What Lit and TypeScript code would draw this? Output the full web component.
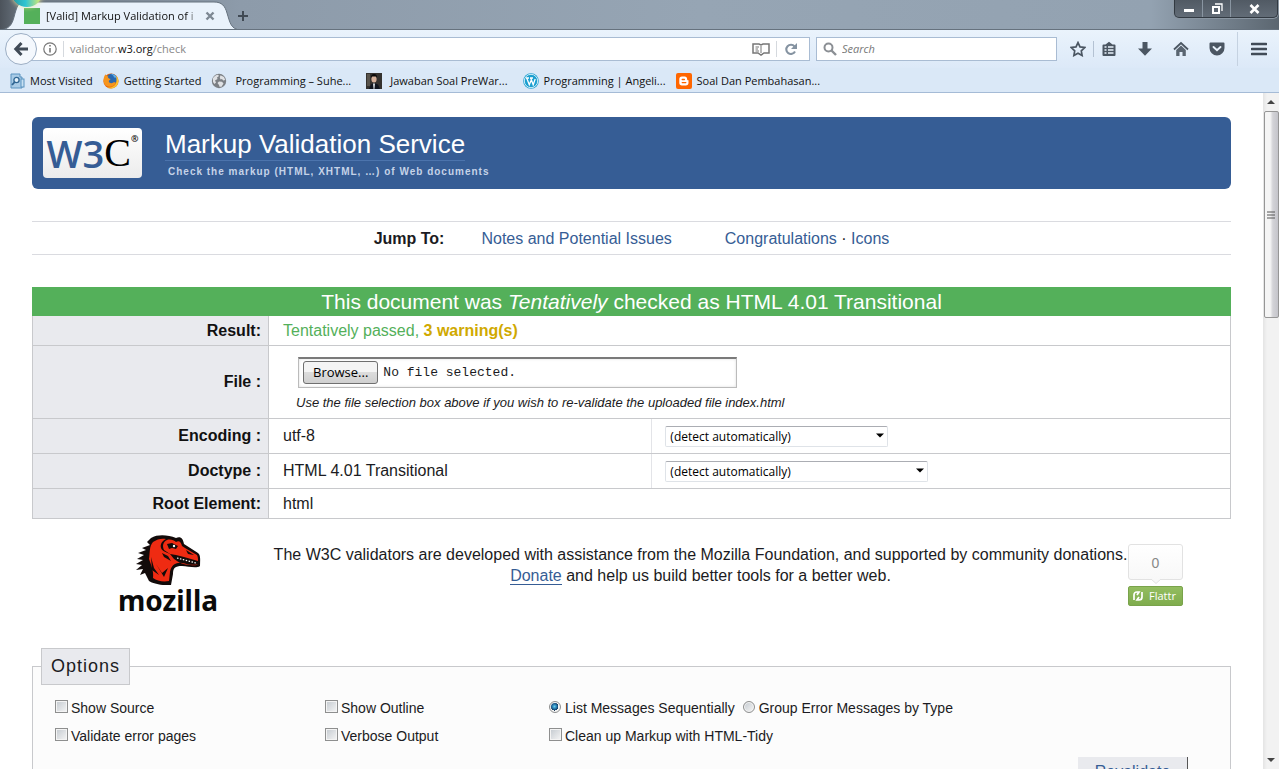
import { LitElement, html, css, svg } from "lit";
import { customElement, state } from "lit/decorators.js";

const bookmarkIcons: Record<string, unknown> = {
  visited: svg`<path d="M2 1h9v3h2v11H2z" fill="#a9cbe6" stroke="#5b93bf"/><rect x="12" y="6" width="3" height="8" fill="#c7e0f2" stroke="#5b93bf"/><circle cx="7.5" cy="7" r="2.6" fill="#e4f1fb" stroke="#2f6592" stroke-width="1.3"/><path d="M5.6 9.2 3 12" stroke="#2f6592" stroke-width="1.8"/>`,
  firefox: svg`<circle cx="8" cy="8" r="7.6" fill="#e8650d"/><circle cx="8.6" cy="6.2" r="5.4" fill="#2a68b0"/><path d="M8 1c4 0 6 2.600 6 5-1-1.500-2-1.700-3-1.500C11 3 9.500 2 8 1z" fill="#5fb0e8"/><path d="M.6 6C1 3 2 2 2.600 1.200 3 2.500 4 3.200 5.400 3.600 4.800 4.500 5 5.200 6 5.500L7.600 6C7 7.200 5.600 7.300 5.800 8.600c.5 1.800 3 2 4.400 1 1.500-.9 2.800.1 2.400.7C11 14.500 4 15 1.500 11 .6 9.500.4 7.500.6 6z" fill="#f6951d"/><path d="M13.500 3c2 2.500 2.500 6 .8 8.800C12 15.600 7 16.500 4 14.500c5 .7 9-2 9.500-6z" fill="#fbc42d"/>`,
  globe: svg`<circle cx="8" cy="8" r="7.200" fill="#7b7f84"/><path d="M2 5c1.500-2 3-3 5-3.200L8 3 6 4.500 6.500 6 4 7.500 5 9.500 3.500 11 2 9z" fill="#dfe1e4"/><path d="M9.500 2.200 13 4l1.200 3-2 .5L11 6 9.500 6.500 8.800 4.500zM8 8.500l3 .3 1.500 1.700-2 3.300H8.500L8 12 6.500 10z" fill="#dfe1e4"/>`,
  portrait: svg`<rect width="16" height="16" fill="#35322f"/><rect x="1" y="1" width="3" height="12" fill="#59544c"/><path d="M3 16 5 11.500 8 10l4 1.500 2 4.500z" fill="#10151f"/><ellipse cx="8" cy="6" rx="2.600" ry="3.600" fill="#d5b09a"/><path d="M5 5C5 2 6 1 8 1s3.200 1 3 4l-1-1.500H6z" fill="#0b0a0a"/><path d="M7 10.500h2L8.400 16h-.8z" fill="#e3e8ed"/>`,
  wordpress: svg`<circle cx="8" cy="8" r="7.800" fill="#1b9fd0"/><circle cx="8" cy="8" r="6.700" fill="none" stroke="#fff" stroke-width=".8"/><path d="M3 5h3M7 5h3M3.800 5.200 6.300 11.800 8 7.500M7.800 5.200l2.400 6.600 2-5.800" fill="none" stroke="#fff" stroke-width="1.300"/>`,
  blogger: svg`<rect width="16" height="16" rx="2" fill="#f60"/><path d="M6 3.500h2.600a2.500 2.500 0 0 1 2.500 2.500c0 1 .3 1.200 1.400 1.300v2.500a2.700 2.700 0 0 1-2.700 2.700H6a2.700 2.700 0 0 1-2.700-2.700V6.200A2.700 2.700 0 0 1 6 3.500z" fill="#fff"/><path d="M6.200 6.500h2.200M6.200 9.600h3.600" stroke="#f60" stroke-width="1.300" stroke-linecap="round"/>`,
};

const toolIcons = [
  { name: "Bookmark this page", art: svg`<path d="m8 1.600 2 4.300 4.700.6-3.400 3.300.8 4.700L8 12.200l-4.100 2.300.8-4.700L1.300 6.500 6 5.900z" fill="none" stroke="#4b5662" stroke-width="1.700"/>` },
  { name: "Library", art: svg`<path d="M1.500 4.500a1 1 0 0 1 1-1h2L8 .8l3.500 2.700h2a1 1 0 0 1 1 1V14a1 1 0 0 1-1 1h-11a1 1 0 0 1-1-1z" fill="#4b5662"/><path d="M3.500 6h2M7 6h5.500M3.500 9h2M7 9h5.500M3.500 12h2M7 12h5.500" stroke="#e9f2fb" stroke-width="1.500"/>` },
  { name: "Downloads", art: svg`<path d="M5.500 1h5v6.500H15L8 14.800 1 7.500h4.500z" fill="#4b5662"/>` },
  { name: "Home", art: svg`<path d="M1 8.500 8 2l7 6.500" fill="none" stroke="#4b5662" stroke-width="1.800"/><path d="M3.200 9 8 4.600 12.800 9v6H9.500v-4h-3v4H3.200z" fill="#5a6571"/>` },
  { name: "Pocket", art: svg`<path d="M1.500 1.500h13a1 1 0 0 1 1 1V7a7.500 7.500 0 0 1-15 0V2.500a1 1 0 0 1 1-1z" fill="#4b5662"/><path d="m4.500 6 3.500 3.300L11.500 6" fill="none" stroke="#e9f2fb" stroke-width="1.900" stroke-linecap="round"/>` },
];

@customElement("browser-chrome")
export class BrowserChrome extends LitElement {
  static styles = css`
    :host { display: block; font: 11px/16px "Open Sans", "Noto Sans", sans-serif; color: #111; }
    * { box-sizing: border-box; }
    svg { display: block; flex: none; }
    button { border: 0; padding: 0; background: none; font: inherit; color: inherit; }
    .strip { display: flex; align-items: flex-start; height: 30px; overflow: hidden; position: relative;
      border-bottom: 1px solid #66727e;
      background: linear-gradient(90deg, #4c535b 0, #6c7782 22px, #8d9baa 240px, #96a5b4 700px, #93a2b1 90%, #5b6670 100%); }
    .orb { position: absolute; left: 12px; top: -20px; width: 30px; height: 27px; border-radius: 50%;
      background: linear-gradient(90deg, #2799a0, #2fc4d2 45%, #e6ee66); box-shadow: 0 0 5px #f1f0a0; }
    .tab { position: relative; width: 237px; height: 30px; display: flex; align-items: center; gap: 6px; padding: 2px 22px 0 24px; }
    .shape { position: absolute; left: 0; top: 0; }
    .fav { position: relative; width: 16px; height: 16px; flex: none; background: #54b05a; }
    .title { position: relative; flex: 1; min-width: 0; overflow: hidden; white-space: nowrap;
      mask-image: linear-gradient(90deg, #000 92%, transparent); }
    .close { position: relative; }
    .add { padding: 10px 0 0 0; }
    .wins { margin-left: auto; margin-right: 1px; display: flex; height: 18px; border: 1px solid #323a42; border-top: 0;
      border-radius: 0 0 5px 5px; background: linear-gradient(#515a64, #626c77); box-shadow: 0 0 0 1px #8995a1; overflow: hidden; }
    .win { width: 28px; display: grid; place-items: center; border-right: 1px solid #8995a1; }
    .win:last-child { width: 46px; border: 0; }
    .nav { display: flex; align-items: center; height: 38px; padding: 0 12px 0 5px; background: linear-gradient(#eaf3fc, #dce9f8); }
    .back { width: 32px; height: 32px; flex: none; border: 1px solid #9caec4; border-radius: 50%; background: #f4f8fd;
      display: grid; place-items: center; z-index: 1; margin-right: -7px; }
    .box { height: 24px; border: 1px solid #a9bcd3; background: #fff; display: flex; align-items: center; }
    .url { flex: 3.330; padding: 0 10px 0 12px; gap: 6px; }
    .sep { width: 1px; height: 16px; background: #d5d9de; }
    .address { flex: 1; color: #888; }
    .address b { font-weight: 400; color: #111; }
    .find { flex: 1; margin-left: 6px; padding: 0 6px; gap: 5px; }
    .find input { flex: 1; min-width: 0; border: 0; padding: 0; outline: 0; background: none; font: inherit; }
    .find input::placeholder { font-style: italic; color: #777; }
    .tools { display: flex; align-items: center; gap: 20px; padding-left: 13px; }
    .tools .star { margin-right: -13px; padding-right: 7px; border-right: 1px solid #b4c2d3; }
    .menu { height: 34px; display: grid; place-items: center; margin-left: 12px; padding-left: 13px; border-left: 1px solid #c5d2e1; }
    .marks { display: flex; align-items: center; height: 25px; padding: 1px 9px 0; border-bottom: 1px solid #a5bbd6; background: #dae8f7; }
    .mark { display: flex; align-items: center; gap: 5px; margin-right: 10px; color: #111; text-decoration: none; white-space: nowrap; }
    .mark.wide { gap: 8px; margin-right: 15px; }
  `;

  render() {
    const marks = [
      ["visited", "Most Visited", ""],
      ["firefox", "Getting Started", ""],
      ["globe", "Programming – Suhe...", "wide"],
      ["portrait", "Jawaban Soal PreWar...", "wide"],
      ["wordpress", "Programming | Angeli...", ""],
      ["blogger", "Soal Dan Pembahasan...", ""],
    ];
    return html`
      <div class="strip">
        <div class="tab">
          <svg class="shape" width="240" height="30" viewBox="0 0 240 30"><path d="M0 30C9 29 12 25 14 17 17 6 18 2 26 2H214c8 0 11 4 13 11 3 10 4 16 13 17z" fill="#e9f2fb" stroke="#66727e" stroke-width="1"/></svg>
          <span class="fav"></span>
          <span class="title">[Valid] Markup Validation of i</span>
          <button class="close" aria-label="Close tab"><svg width="10" height="10" viewBox="0 0 10 10"><path d="m1.500 1.500 7 7m0-7-7 7" stroke="#7d8893" stroke-width="2.400"/></svg></button>
        </div>
        <button class="add" aria-label="New tab"><svg width="12" height="12" viewBox="0 0 12 12"><path d="M6 1v10M1 6h10" stroke="#414a54" stroke-width="2"/></svg></button>
        <span class="orb"></span>
        <div class="wins">
          <button class="win" aria-label="Minimise"><svg width="12" height="10" viewBox="0 0 12 10"><path d="M1 5h10v3H1z" fill="#fff"/></svg></button>
          <button class="win" aria-label="Restore"><svg width="12" height="12" viewBox="0 0 12 12"><path d="M4 1h7v7" fill="none" stroke="#fff" stroke-width="1.300"/><path d="M2 4h6v6H2z" fill="none" stroke="#fff" stroke-width="2"/></svg></button>
          <button class="win" aria-label="Close window"><svg width="11" height="10" viewBox="0 0 11 10"><path d="m1.500 1 8 8m0-8-8 8" stroke="#fff" stroke-width="2.600"/></svg></button>
        </div>
      </div>
      <div class="nav">
        <button class="back" aria-label="Back"><svg width="16" height="16" viewBox="0 0 16 16"><path d="M8.500 2 2.800 8l5.700 6M3 8h12" fill="none" stroke="#414b57" stroke-width="3"/></svg></button>
        <div class="box url">
          <svg width="14" height="14" viewBox="0 0 14 14"><circle cx="7" cy="7" r="6.200" fill="none" stroke="#777" stroke-width="1.200"/><path d="M7 6v4.500M7 3v1.600" stroke="#777" stroke-width="1.600"/></svg>
          <span class="sep"></span>
          <span class="address">validator.<b>w3.org</b>/check</span>
          <svg width="18" height="14" viewBox="0 0 18 14"><path d="M1 2h6l2 1 2-1h6v9h-5l-3 2-3-2H1z" fill="none" stroke="#777" stroke-width="1.500"/><path d="M9 4v7M3.500 5H7M3.500 7H6M3.500 9H7" stroke="#777"/></svg>
          <span class="sep"></span>
          <svg width="16" height="14" viewBox="0 0 16 14"><path d="M11.500 4.500A4.600 4.600 0 1 0 12 9.500" fill="none" stroke="#8593a1" stroke-width="2.100"/><path d="M14 1v6H8z" fill="#8593a1"/></svg>
        </div>
        <div class="box find">
          <svg width="14" height="14" viewBox="0 0 14 14"><circle cx="5.500" cy="5.500" r="4" fill="none" stroke="#8b8f94" stroke-width="2"/><path d="m8.500 8.500 4.500 4.500" stroke="#8b8f94" stroke-width="2.400"/></svg>
          <input aria-label="Search" placeholder="Search" />
        </div>
        <div class="tools">
          ${toolIcons.map((t, i) => html`<button class=${i ? "" : "star"} aria-label=${t.name}><svg width="16" height="16" viewBox="0 0 16 16">${t.art}</svg></button>`)}
        </div>
        <button class="menu" aria-label="Menu"><svg width="16" height="16" viewBox="0 0 16 16"><path d="M1 3h14M1 8h14M1 13h14" stroke="#414b57" stroke-width="2.600" stroke-linecap="round"/></svg></button>
      </div>
      <nav class="marks">
        ${marks.map(([icon, text, cls]) => html`<a class="mark ${cls}" href="#"><svg width="16" height="16" viewBox="0 0 16 16">${bookmarkIcons[icon]}</svg>${text}</a>`)}
      </nav>
    `;
  }
}

@customElement("app-root")
export class AppRoot extends LitElement {
  @state() private fileName = "No file selected.";

  static styles = css`
    :host { display: flex; flex-direction: column; height: 100vh; overflow: hidden; background: #fff; color: #1b1b22;
      font: 16px/21px "Liberation Sans", Arial, sans-serif; }
    * { box-sizing: border-box; }
    svg { display: block; }
    a { color: #365d95; text-decoration: none; }
    h1, h2, p { margin: 0; font-weight: 400; }
    .view { flex: 1; min-height: 0; display: flex; }
    .page { flex: 1; min-width: 0; overflow: hidden; padding: 24px 32px 0; }
    .banner { display: flex; align-items: center; gap: 23px; height: 72px; padding: 0 11px; border-radius: 6px; background: #365d95; }
    .w3c { display: flex; justify-content: center; width: 99px; height: 50px; border-radius: 4px; background: linear-gradient(#fff, #ececec);
      font: 600 38px/50px "Open Sans", sans-serif; color: #365d95; }
    .w3c .c { font: 400 40px/50px "Liberation Serif", serif; color: #000; }
    .w3c .r { font-size: 9px; line-height: 22px; color: #000; }
    .name { font-size: 26px; line-height: 32px; }
    .name a { display: inline-block; color: #fff; border-bottom: 1px solid #4c74ad; }
    .tagline { padding: 4px 0 0 3px; font-size: 10px; line-height: 14px; font-weight: 700; letter-spacing: 1px; color: #c5d3e8; }
    .jump { display: flex; justify-content: center; margin-top: 32px; padding: 6px 0 5px; border: solid #dadbe0; border-width: 1px 0; }
    .jump strong { margin-right: 37px; }
    .jump .notes { margin-right: 53px; }
    .status { margin-top: 32px; height: 29px; background: #54b05a; color: #fff; text-align: center; font-size: 21px; line-height: 29px; }
    table { width: 100%; table-layout: fixed; border-collapse: collapse; border: 1px solid #c8c9cc; border-top: 0; }
    .c1 { width: 236px; }
    .c2 { width: 32%; }
    th, td { height: 30px; padding: 0 14px; border-bottom: 1px solid #c8c9cc; text-align: left; }
    .result th, .result td { height: 29px; }
    th { padding: 0 7px; border-right: 1px solid #c8c9cc; background: #e9eaee; color: #111; text-align: right; }
    .tall th, .tall td { height: 35px; }
    .tall td + td { padding-left: 13px; border-left: 1px solid #e3e4e8; }
    .ok { color: #54b05a; }
    .ok strong { color: #d0a900; }
    .upload { padding: 11px 27px 0; }
    .picker { display: flex; align-items: center; gap: 5px; width: 439px; max-width: 100%; height: 31px; margin-left: 2px; padding: 0 4px;
      border: 1px solid #bbb; border-top: 2px solid #7a7a7a; box-shadow: inset 0 0 3px #ddd; font: 13px/20px "Liberation Mono", monospace; }
    .picker button { height: 23px; padding: 0 9px; border: 1px solid #6f6f6f; border-radius: 3px; color: #000;
      background: linear-gradient(#f4f4f4 50%, #dcdcdc 50%, #cfcfcf); font: 13px/19px "Open Sans", sans-serif; }
    .hint { font-size: 13px; line-height: 30px; font-style: italic; }
    .pick { position: relative; display: inline-block; vertical-align: middle; }
    .pick select { appearance: none; width: 223px; height: 21px; padding: 0 4px; border: 1px solid #dfe3e8; border-top-color: #abadb3;
      border-radius: 2px; background: #fff; color: #000; font: 12px/18px "Open Sans", sans-serif; }
    .pick.wide select { width: 263px; }
    .pick svg { position: absolute; right: 4px; top: 8px; pointer-events: none; }
    .sponsor { display: grid; grid-template-columns: 241px 1fr 103px; margin-top: 16px; height: 80px; }
    .moz { display: flex; flex-direction: column; align-items: center; padding-left: 31px; font: 700 28px/30px "Noto Sans", sans-serif; color: #0b0b0b; }
    .pitch { padding-top: 9px; text-align: center; }
    .pitch a { border-bottom: 1px solid #365d95; }
    .flattr { width: 55px; padding-top: 9px; }
    .count { height: 36px; border: 1px solid #e2e2e2; border-radius: 3px; background: linear-gradient(#fff, #f8f8f8); color: #888;
      font-size: 14px; line-height: 36px; text-align: center; }
    .tip { margin: -1px auto 0; }
    .give { display: flex; align-items: center; gap: 6px; width: 55px; height: 20px; margin-top: 2px; padding: 0 4px; border: 1px solid #79a34b; border-radius: 2px;
      background: linear-gradient(#93bd60, #7fac4d); color: #fff; font: 11px/16px "Open Sans", sans-serif; }
    fieldset { margin: 33px 0 0; padding: 9px 42px 20px 22px; border: 1px solid #c8c9cc; background: #fcfcfc; font-size: 14px; line-height: 28px; min-width: 0; }
    legend { margin-left: -14px; padding: 0 9px; height: 37px; border: 1px solid #c8c9cc; background: #e9eaee; font-size: 18px; line-height: 34px; letter-spacing: 1px; }
    .opts { display: grid; grid-template-columns: 270px 224px 1fr; }
    .opts label { display: inline-flex; align-items: center; gap: 3px; margin-right: 8px; }
    input[type="checkbox"], input[type="radio"] { appearance: none; width: 13px; height: 13px; margin: 0 0 3px; border: 1px solid #8e8f8f;
      background: linear-gradient(135deg, #c3c9cf, #f6f6f6); box-shadow: inset 0 0 0 1px #f4f4f4; }
    input[type="radio"] { width: 12px; height: 12px; margin-right: 1px; border-radius: 50%; }
    input[type="radio"]:checked { background: radial-gradient(circle at 45% 45%, #5fd0f5 0, #16588c 3px, #12304d 4px, #f4f4f4 4px); }
    .submit { display: flex; justify-content: flex-end; padding-top: 7px; }
    .submit button { width: 110px; height: 30px; border: solid #555; border-width: 0 1px 1px 0; background: #e9eaee; color: #365d95; font: 16px/20px "Liberation Sans", sans-serif; }
    .bar { width: 16px; display: flex; flex-direction: column; align-items: center; justify-content: space-between; background: linear-gradient(90deg, #e4e4e4, #f2f2f2 4px); }
    .bar svg { flex: none; margin: 7px 0; }
    .thumb { width: 15px; height: 207px; display: grid; place-items: center; border: 1px solid #969696; border-radius: 2px; background: linear-gradient(90deg, #f5f5f5 40%, #d3d3d7 60%, #c4c4ca); }
    .gap { flex: 1; }
  `;

  private browse() {
    this.renderRoot.querySelector<HTMLInputElement>("#file")?.click();
  }

  private picked(e: Event) {
    const f = (e.target as HTMLInputElement).files?.[0];
    this.fileName = f ? f.name : "No file selected.";
  }

  private check(text: string) {
    return html`<label><input type="checkbox" />${text}</label>`;
  }

  private drop(id: string, cls: string) {
    return html`<span class="pick ${cls}"><select id=${id}><option>(detect automatically)</option></select>
      <svg width="8" height="5" viewBox="0 0 8 5"><path d="M0 .5h8l-4 4z" fill="#000"/></svg></span>`;
  }

  render() {
    return html`
      <browser-chrome></browser-chrome>
      <div class="view">
        <main class="page">
          <header class="banner">
            <div class="w3c"><span>W3</span><span class="c">C</span><span class="r">®</span></div>
            <div>
              <h1 class="name"><a href="#">Markup Validation Service</a></h1>
              <p class="tagline">Check the markup (HTML, XHTML, …) of Web documents</p>
            </div>
          </header>
          <nav class="jump"><strong>Jump To:</strong><a class="notes" href="#">Notes and Potential Issues</a><span><a href="#">Congratulations</a> · <a href="#">Icons</a></span></nav>
          <h2 class="status">This document was <em>Tentatively</em> checked as HTML 4.01 Transitional</h2>
          <table>
            <colgroup><col class="c1" /><col class="c2" /><col /></colgroup>
            <tbody>
              <tr class="result"><th scope="row">Result:</th><td class="ok" colspan="2">Tentatively passed, <strong>3 warning(s)</strong></td></tr>
              <tr>
                <th scope="row"><label for="file">File :</label></th>
                <td class="upload" colspan="2">
                  <div class="picker"><input id="file" type="file" hidden @change=${this.picked} /><button type="button" @click=${this.browse}>Browse...</button><span>${this.fileName}</span></div>
                  <p class="hint">Use the file selection box above if you wish to re-validate the uploaded file index.html</p>
                </td>
              </tr>
              <tr class="tall"><th scope="row"><label for="enc">Encoding :</label></th><td>utf-8</td><td>${this.drop("enc", "")}</td></tr>
              <tr class="tall"><th scope="row"><label for="doc">Doctype :</label></th><td>HTML 4.01 Transitional</td><td>${this.drop("doc", "wide")}</td></tr>
              <tr><th scope="row">Root Element:</th><td colspan="2">html</td></tr>
            </tbody>
          </table>
          <section class="sponsor">
            <div class="moz">
              <svg width="68" height="50" viewBox="0 0 68 50">
                <path d="M17 3C24-1 34 0 42 3c5-2 7 1 8 6l14 9c3 2 2 8 2 13-4 3-12 0-18 0-7 0-9 2-9 8l-2 11C27 51 18 48 15 46l-4-8-5 2 3-6-7 1 6-5-6-1 7-4-6-1 7-4-6-2 8-3-4-2 8-3-3-3z" fill="#120b0a"/>
                <path d="M19 7c4-3 9-4 13-3-4 2-6 5-5 9 1 3 5 4 9 6l4 5c4 3 10 6 16 6 3 0 6 1 8-1-5 2-11 0-16-1-7-1-11 3-12 9l-1 9c-6 1-12 0-16-3 1-7-2-13-4-19 1-5 0-13 4-17z" fill="#ef2b12"/>
                <path d="M33 5c3-1 7 0 9 2 3-2 5 0 6 4l3 2 12 7c1 2 1 4 1 6l-14-4-8-2-6-1-6-4c-2-4-1-8 3-10z" fill="#ef2b12"/>
                <path d="m33 9 5-1 6 3-2 3-4-1-3 1zM17 22l3 11 5 7-7-5zM22 29l6 9 6-5-4 9zM28 18l6 3 3 5-7-4zM52 15l8 5-6-1z" fill="#120b0a"/>
                <path d="m43 23 19 5" stroke="#fff" stroke-width="1.200" stroke-dasharray="1.500 1.500"/><circle cx="40" cy="11" r="1.200" fill="#fff"/>
              </svg>
              mozilla
            </div>
            <p class="pitch">The W3C validators are developed with assistance from the Mozilla Foundation, and supported by community donations.<br /><a href="#">Donate</a> and help us build better tools for a better web.</p>
            <div class="flattr">
              <div class="count">0</div>
              <svg class="tip" width="10" height="5" viewBox="0 0 10 5"><path d="m0 0 5 4.500L10 0" fill="#f8f8f8" stroke="#e2e2e2"/></svg>
              <button class="give"><svg width="10" height="10" viewBox="0 0 10 10"><path d="M1 9V4q0-3 3-3h2L4 4M9 1v5q0 3-3 3H4l2-3" fill="none" stroke="#fff" stroke-width="1.700"/></svg>Flattr</button>
            </div>
          </section>
          <fieldset>
            <legend>Options</legend>
            <div class="opts">
              <div>${this.check("Show Source")}</div>
              <div>${this.check("Show Outline")}</div>
              <div><label><input type="radio" name="group" checked />List Messages Sequentially</label><label><input type="radio" name="group" />Group Error Messages by Type</label></div>
              <div>${this.check("Validate error pages")}</div>
              <div>${this.check("Verbose Output")}</div>
              <div>${this.check("Clean up Markup with HTML-Tidy")}</div>
            </div>
            <div class="submit"><button type="submit">Revalidate</button></div>
          </fieldset>
        </main>
        <div class="bar">
          <svg width="8" height="4" viewBox="0 0 8 4"><path d="M0 4h8L4 0z" fill="#444"/></svg>
          <div class="thumb"><svg width="8" height="8" viewBox="0 0 8 8"><path d="M0 1h8M0 4h8M0 7h8" stroke="#555"/></svg></div>
          <span class="gap"></span>
          <svg width="8" height="4" viewBox="0 0 8 4"><path d="M0 0h8L4 4z" fill="#444"/></svg>
        </div>
      </div>
    `;
  }
}
